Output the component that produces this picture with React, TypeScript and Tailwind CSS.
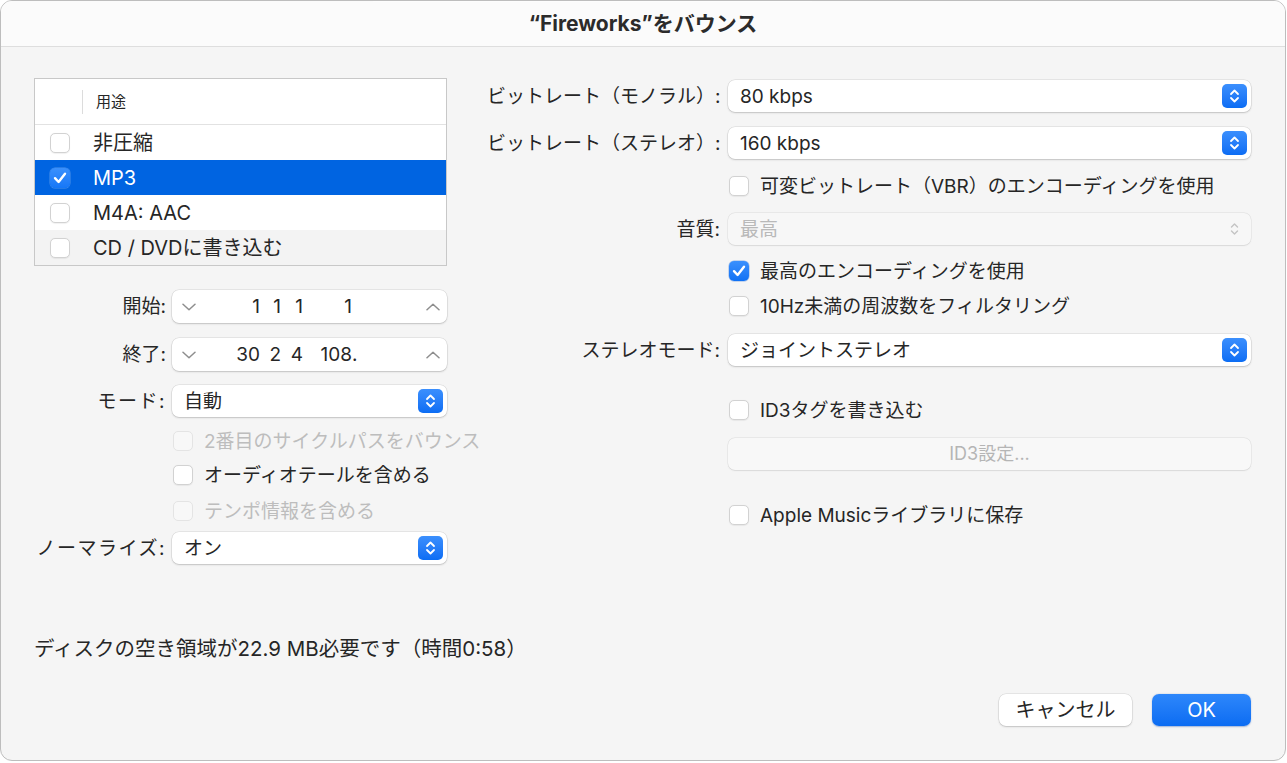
import React from "react";

const TXT = "text-[#262626]";

function CheckIcon() {
  return (
    <svg width="20" height="20" viewBox="0 0 20 20" className="block">
      <path d="M5 10.2 L8.6 14 L15 5.8" fill="none" stroke="white" strokeWidth="2.4" strokeLinecap="round" strokeLinejoin="round" />
    </svg>
  );
}

function Check({ checked = false, disabled = false }: { checked?: boolean; disabled?: boolean }) {
  if (checked) {
    return (
      <div className="w-[20px] h-[20px] rounded-[5px] bg-gradient-to-b from-[#3a90fd] to-[#0f71f4] shadow-[0_0_0_0.5px_rgba(0,80,200,0.4)] shrink-0">
        <CheckIcon />
      </div>
    );
  }
  return (
    <div
      className={
        "w-[20px] h-[20px] rounded-[5px] shrink-0 border " +
        (disabled
          ? "bg-[#f8f8f8] border-[#e4e4e4]"
          : "bg-white border-[#d2d2d2] shadow-[0_0.5px_1px_rgba(0,0,0,0.06)]")
      }
    />
  );
}

function BlueArrows() {
  return (
    <div className="w-[25px] h-[24px] rounded-[5px] bg-gradient-to-b from-[#3b8ffd] to-[#0b6df4] flex items-center justify-center shrink-0">
      <svg width="11" height="16" viewBox="0 0 11 16">
        <path d="M2 6 L5.5 2.5 L9 6" fill="none" stroke="white" strokeWidth="1.8" strokeLinecap="round" strokeLinejoin="round" />
        <path d="M2 10 L5.5 13.5 L9 10" fill="none" stroke="white" strokeWidth="1.8" strokeLinecap="round" strokeLinejoin="round" />
      </svg>
    </div>
  );
}

function GrayArrows() {
  return (
    <div className="w-[25px] h-[24px] flex items-center justify-center shrink-0">
      <svg width="11" height="16" viewBox="0 0 11 16">
        <path d="M2.5 6 L5.5 3 L8.5 6" fill="none" stroke="#c4c4c4" strokeWidth="1.4" strokeLinecap="round" strokeLinejoin="round" />
        <path d="M2.5 10 L5.5 13 L8.5 10" fill="none" stroke="#c4c4c4" strokeWidth="1.4" strokeLinecap="round" strokeLinejoin="round" />
      </svg>
    </div>
  );
}

function Select({ value, disabled = false }: { value: string; disabled?: boolean }) {
  return (
    <div
      className={
        "w-full h-[32px] rounded-[7px] flex items-center pl-[12px] pr-[4px] " +
        (disabled
          ? "bg-[#f7f7f7] shadow-[0_0_0_0.5px_rgba(0,0,0,0.08),0_0.5px_1.5px_rgba(0,0,0,0.08)]"
          : "bg-white shadow-[0_0_0_0.5px_rgba(0,0,0,0.12),0_1px_2px_rgba(0,0,0,0.16)]")
      }
    >
      <span className={"flex-1 text-[19px] leading-none whitespace-nowrap " + (disabled ? "text-[#b9b9b9]" : TXT)}>{value}</span>
      {disabled ? <GrayArrows /> : <BlueArrows />}
    </div>
  );
}

function ChevDown() {
  return (
    <svg width="14" height="8" viewBox="0 0 14 8" className="shrink-0">
      <path d="M1 1.2 L7 6.8 L13 1.2" fill="none" stroke="#8e8e8e" strokeWidth="1.5" strokeLinecap="round" strokeLinejoin="round" />
    </svg>
  );
}
function ChevUp() {
  return (
    <svg width="14" height="8" viewBox="0 0 14 8" className="shrink-0">
      <path d="M1 6.8 L7 1.2 L13 6.8" fill="none" stroke="#8e8e8e" strokeWidth="1.5" strokeLinecap="round" strokeLinejoin="round" />
    </svg>
  );
}

function Stepper({ a, b, c, d, dot = false }: { a: string; b: string; c: string; d: string; dot?: boolean }) {
  return (
    <div className="w-full h-[33px] rounded-[7px] bg-white shadow-[0_0_0_0.5px_rgba(0,0,0,0.12),0_1px_2px_rgba(0,0,0,0.16)] flex items-center pl-[10px] pr-[7px]">
      <ChevDown />
      <div className={"flex-1 flex items-center text-[19px] leading-none " + TXT}>
        <span className="w-[64px] text-right">{a}</span>
        <span className="w-[21px] text-right">{b}</span>
        <span className="w-[22px] text-right">{c}</span>
        <span className="w-[49px] text-right">{d}</span>
        {dot && <span>.</span>}
      </div>
      <ChevUp />
    </div>
  );
}

function CheckRow({
  label,
  checked = false,
  disabled = false,
  mt,
}: {
  label: string;
  checked?: boolean;
  disabled?: boolean;
  mt: string;
}) {
  return (
    <div className={"h-[24px] flex items-center gap-[11px] " + mt}>
      <Check checked={checked} disabled={disabled} />
      <span className={"text-[19px] leading-none whitespace-nowrap " + (disabled ? "text-[#bdbdbd]" : TXT)}>{label}</span>
    </div>
  );
}

function TableRow({ label, checked = false, selected = false, alt = false }: { label: string; checked?: boolean; selected?: boolean; alt?: boolean }) {
  return (
    <div
      className={
        "h-[35px] flex items-center pl-[15px] gap-[23px] " +
        (selected ? "bg-[#0064e1]" : alt ? "bg-[#f3f3f3]" : "bg-white")
      }
    >
      {selected ? (
        <div className="w-[20px] h-[20px] rounded-[5px] bg-gradient-to-b from-[#3a90fd] to-[#1577f7] shadow-[0_0_0_0.5px_rgba(255,255,255,0.3)] shrink-0">
          <CheckIcon />
        </div>
      ) : (
        <Check checked={checked} />
      )}
      <span className={"text-[20px] leading-none " + (selected ? "text-white" : TXT)}>{label}</span>
    </div>
  );
}

function LabelRow({ label, children, mt, h, wide = false }: { label: string; children: React.ReactNode; mt: string; h: string; wide?: boolean }) {
  return (
    <div className={"flex items-center gap-[6px] " + mt + " " + h}>
      <div className={"w-[132px] text-right text-[19px] leading-none whitespace-nowrap " + (wide ? "tracking-[1.5px] " : "") + TXT}>{label}</div>
      <div className="w-[275px]">{children}</div>
    </div>
  );
}

function RLabelRow({ label, children, mt, h }: { label: string; children: React.ReactNode; mt: string; h: string }) {
  return (
    <div className={"flex items-center gap-[8px] " + mt + " " + h}>
      <div className={"w-[233px] text-right text-[19px] leading-none whitespace-nowrap " + TXT}>{label}</div>
      <div className="w-[523px]">{children}</div>
    </div>
  );
}

export default function App() {
  return (
    <div className="w-[1287px] h-[763px] bg-white font-[Inter,'Noto_Sans_CJK_JP',sans-serif]">
      <div className="relative w-[1286px] h-[761px] rounded-[12px] border border-[#bdbdbd] overflow-hidden bg-[#f5f5f5] flex flex-col">
        <div className="absolute top-[-1px] left-[372px] w-[439px] h-[2px] bg-[#fdfdfd]" />
        {/* Title bar */}
        <div className="h-[46px] shrink-0 bg-[#fbfbfb] border-b border-[#dedede] flex items-center justify-center">
          <span className="text-[21px] font-bold text-[#2b2b2b] leading-none">“Fireworks”をバウンス</span>
        </div>

        {/* Body */}
        <div className="h-[590px] shrink-0 flex pl-[33px] gap-[40px]">
          {/* Left column */}
          <div className="w-[413px] flex flex-col pt-[31px]">
            <div className="w-[413px] h-[188px] border border-[#c8c8c8] bg-white flex flex-col">
              <div className="h-[45px] flex items-center">
                <div className="w-[47px]" />
                <div className="w-px h-[24px] bg-[#dcdcdc]" />
                <span className={"ml-[13px] text-[15px] leading-none " + TXT}>用途</span>
              </div>
              <div className="h-px bg-[#e2e2e2]" />
              <TableRow label="非圧縮" />
              <TableRow label="MP3" selected />
              <TableRow label="M4A: AAC" />
              <TableRow label="CD / DVDに書き込む" alt />
            </div>

            <LabelRow label="開始:" mt="mt-[24px]" h="h-[33px]">
              <Stepper a="1" b="1" c="1" d="1" />
            </LabelRow>
            <LabelRow label="終了:" mt="mt-[15px]" h="h-[33px]">
              <Stepper a="30" b="2" c="4" d="108" dot />
            </LabelRow>
            <LabelRow label="モード:" mt="mt-[14px]" h="h-[32px]" wide>
              <Select value="自動" />
            </LabelRow>
            <div className="pl-[139px] flex flex-col">
              <CheckRow label="2番目のサイクルパスをバウンス" disabled mt="mt-[12px]" />
              <CheckRow label="オーディオテールを含める" mt="mt-[10px]" />
              <CheckRow label="テンポ情報を含める" disabled mt="mt-[12px]" />
            </div>
            <LabelRow label="ノーマライズ:" mt="mt-[9px]" h="h-[32px]" wide>
              <Select value="オン" />
            </LabelRow>
          </div>

          {/* Right column */}
          <div className="w-[764px] flex flex-col pt-[33px]">
            <RLabelRow label="ビットレート（モノラル）:" mt="" h="h-[32px]">
              <Select value="80 kbps" />
            </RLabelRow>
            <RLabelRow label="ビットレート（ステレオ）:" mt="mt-[15px]" h="h-[32px]">
              <Select value="160 kbps" />
            </RLabelRow>
            <div className="pl-[242px] flex flex-col">
              <CheckRow label="可変ビットレート（VBR）のエンコーディングを使用" mt="mt-[15px]" />
            </div>
            <RLabelRow label="音質:" mt="mt-[15px]" h="h-[32px]">
              <Select value="最高" disabled />
            </RLabelRow>
            <div className="pl-[242px] flex flex-col">
              <CheckRow label="最高のエンコーディングを使用" checked mt="mt-[14px]" />
              <CheckRow label="10Hz未満の周波数をフィルタリング" mt="mt-[11px]" />
            </div>
            <RLabelRow label="ステレオモード:" mt="mt-[16px]" h="h-[32px]">
              <Select value="ジョイントステレオ" />
            </RLabelRow>
            <div className="pl-[242px] flex flex-col">
              <CheckRow label="ID3タグを書き込む" mt="mt-[32px]" />
            </div>
            <div className="pl-[241px] mt-[16px]">
              <div className="w-[523px] h-[32px] rounded-[7px] bg-[#f8f8f8] shadow-[0_0_0_0.5px_rgba(0,0,0,0.08),0_0.5px_1.5px_rgba(0,0,0,0.08)] flex items-center justify-center">
                <span className="text-[18px] leading-none text-[#b5b5b5]">ID3設定...</span>
              </div>
            </div>
            <div className="pl-[242px] flex flex-col">
              <CheckRow label="Apple Musicライブラリに保存" mt="mt-[33px]" />
            </div>
          </div>
        </div>

        {/* Bottom info */}
        <div className="h-[24px] pl-[33px] flex items-center">
          <span className={"text-[20.5px] leading-none " + TXT}>ディスクの空き領域が22.9 MB必要です（時間0:58）</span>
        </div>

        <div className="mt-[33px] flex justify-end pr-[34px] gap-[20px]">
          <div className="w-[133px] h-[32px] rounded-[7px] bg-white shadow-[0_0_0_0.5px_rgba(0,0,0,0.12),0_1px_2px_rgba(0,0,0,0.16)] flex items-center justify-center">
            <span className={"text-[20px] leading-none " + TXT}>キャンセル</span>
          </div>
          <div className="w-[99px] h-[32px] rounded-[7px] bg-gradient-to-b from-[#2d87fb] to-[#0a6cf2] shadow-[0_0.5px_1.5px_rgba(0,60,160,0.35)] flex items-center justify-center">
            <span className="text-[20px] leading-none text-white">OK</span>
          </div>
        </div>
      </div>
    </div>
  );
}
